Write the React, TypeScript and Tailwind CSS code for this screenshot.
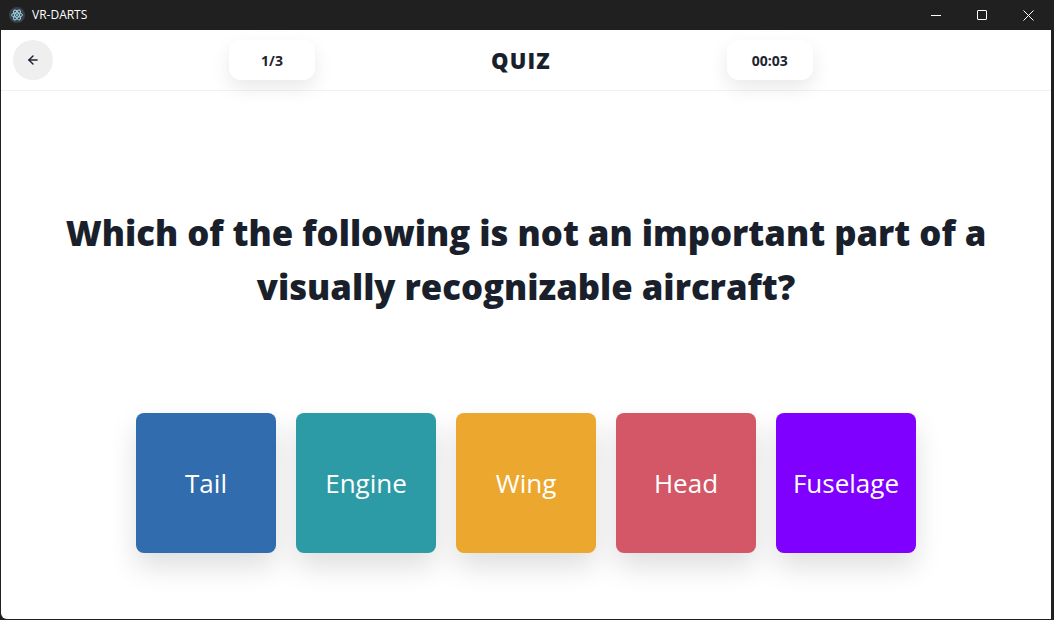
import { ArrowLeft } from "lucide-react";

const answers = [
  { label: "Tail", color: "bg-[#306cae]" },
  { label: "Engine", color: "bg-[#2c9ba6]" },
  { label: "Wing", color: "bg-[#eca72e]" },
  { label: "Head", color: "bg-[#d45768]" },
  { label: "Fuselage", color: "bg-[#8000ff]" },
];

const AppIcon = () => (
  <svg width="16" height="16" viewBox="0 0 16 16">
    <circle cx="8" cy="8" r="8" fill="#3a3f4a" />
    <g fill="none" stroke="#9fd8e8" strokeWidth="0.9">
      <ellipse cx="8" cy="8" rx="5.5" ry="2.2" />
      <ellipse cx="8" cy="8" rx="5.5" ry="2.2" transform="rotate(60 8 8)" />
      <ellipse cx="8" cy="8" rx="5.5" ry="2.2" transform="rotate(-60 8 8)" />
    </g>
    <circle cx="8" cy="8" r="1" fill="#9fd8e8" />
  </svg>
);

const TitleBar = () => (
  <div className="flex h-[30px] shrink-0 items-center bg-[#202020] text-white">
    <div className="ml-[9px] flex items-center gap-[7px]">
      <AppIcon />
      <span className="text-[12px]" style={{ fontFamily: "'Open Sans', sans-serif" }}>
        VR-DARTS
      </span>
    </div>
    <div className="ml-auto flex h-full items-center pr-[3px]">
      <div className="flex h-full w-[46px] items-center justify-center">
        <div className="h-px w-[10px] bg-white" />
      </div>
      <div className="flex h-full w-[46px] items-center justify-center">
        <div className="h-[10px] w-[10px] rounded-[1px] border border-white" />
      </div>
      <div className="flex h-full w-[46px] items-center justify-center">
        <svg width="11" height="11" viewBox="0 0 11 11">
          <path d="M0.5 0.5L10.5 10.5M10.5 0.5L0.5 10.5" stroke="white" strokeWidth="1" />
        </svg>
      </div>
    </div>
  </div>
);

export default function App() {
  return (
    <div
      className="flex h-[620px] w-[1054px] flex-col overflow-hidden bg-[#202020]"
      style={{ fontFamily: "'Open Sans', 'Noto Sans', sans-serif" }}
    >
      <TitleBar />
      <div className="mb-px ml-px mr-[3px] flex flex-1 flex-col rounded-bl-[6px] bg-white">
        <header className="flex h-[61px] shrink-0 items-center gap-[176px] border-b border-[#f1f1f3] px-3">
          <button className="flex size-10 items-center justify-center rounded-full bg-[#efefef] text-[#1e2330]">
            <ArrowLeft size={14} strokeWidth={2.5} />
          </button>
          <div className="flex h-10 w-[86px] items-center justify-center rounded-xl bg-white text-[14px] font-bold text-[#1e2330] shadow-[0_8px_20px_rgba(0,0,0,0.09)]">
            1/3
          </div>
          <h1 className="text-[22px] font-extrabold tracking-[0.05em] text-[#1a1f2c]">QUIZ</h1>
          <div className="flex h-10 w-[86px] items-center justify-center rounded-xl bg-white text-[14px] font-bold text-[#1e2330] shadow-[0_8px_20px_rgba(0,0,0,0.09)]">
            00:03
          </div>
        </header>

        <main className="flex flex-col items-center">
          <h2 className="mt-[115px] max-w-[980px] text-center text-[34.7px] leading-[54px] font-extrabold text-[#1a1f2c]">
            Which of the following is not an important part of a visually recognizable aircraft?
          </h2>
          <div className="mt-[99px] flex gap-5">
            {answers.map((a) => (
              <button
                key={a.label}
                className={`flex size-[140px] items-center justify-center rounded-lg text-[26px] text-white shadow-[0_14px_28px_rgba(0,0,0,0.13)] ${a.color}`}
              >
                {a.label}
              </button>
            ))}
          </div>
        </main>
      </div>
    </div>
  );
}
